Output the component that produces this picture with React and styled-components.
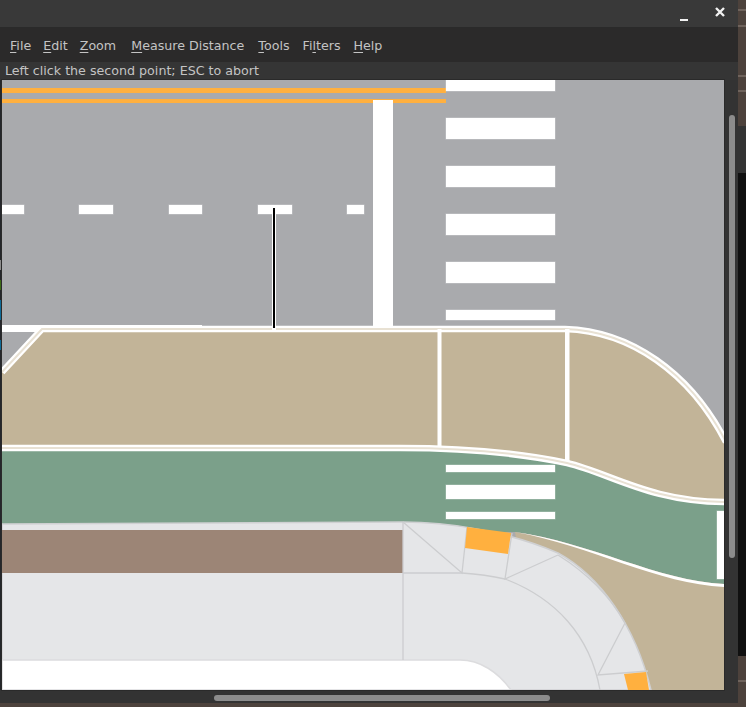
import styled, { createGlobalStyle } from 'styled-components'

const GlobalStyle = createGlobalStyle`
  html, body {
    margin: 0;
    padding: 0;
    background: #111;
    overflow: hidden;
  }
`

const MENUS = [
  { key: 'file', mark: 'F', rest: 'ile' },
  { key: 'edit', mark: 'E', rest: 'dit' },
  { key: 'zoom', mark: 'Z', rest: 'oom', extra: 3 },
  { key: 'measure', mark: 'M', rest: 'easure Distance', extra: 2 },
  { key: 'tools', mark: 'T', rest: 'ools', extra: 1 },
  { key: 'filters', before: 'Fi', mark: 'l', rest: 'ters', extra: 1 },
  { key: 'help', mark: 'H', rest: 'elp' },
]

const CROSSWALK_ROAD = [
  [80, 11],
  [118, 21],
  [166, 21],
  [214, 21],
  [262, 21],
  [310, 10],
]
const CROSSWALK_GREEN = [
  [465, 7],
  [485, 14],
  [512, 7],
]
const DASHES = [
  [2, 22],
  [79, 34],
  [169, 33],
  [258, 34],
  [347, 17],
]

const TAN_TOP = 'M2 372 L42 329 L565 329 C630 331 690 372 726 442'
const TAN_BOTTOM = 'M2 448 L400 448 C450 448 510 451 567 463 C610 473 650 502 726 502'
const GREEN_EDGE = 'M515 532 C590 542 660 582 726 584'

const tileLines = (lines) =>
  lines
    .map((y) => `linear-gradient(#6f635c, #6f635c) 0 ${y}px / 100% 2px no-repeat`)
    .join(', ')

const Page = styled.div`
  width: 746px;
  height: 707px;
  display: flex;
  overflow: hidden;
`

const Window = styled.div`
  width: 738px;
  height: 703px;
  display: flex;
  flex-direction: column;
  background: #333;
  font-family: 'DejaVu Sans', sans-serif;
  font-size: 12.67px;
  color: #c4c4c4;
`

const TitleBar = styled.div`
  height: 28px;
  display: flex;
  justify-content: flex-end;
  align-items: center;
  gap: 24px;
  padding-right: 12px;
  background: #393939;
  box-sizing: border-box;
  border-bottom: 1px solid #2a2a2a;
`

const WindowButton = styled.svg`
  width: 12px;
  height: 12px;
  display: block;
  margin-top: ${(props) => props.$offset || 0}px;
`

const MenuBar = styled.nav`
  height: 34px;
  display: flex;
  align-items: center;
  gap: 12px;
  padding: 1px 0 0 10px;
  background: #2b2a2a;
  box-sizing: border-box;
`

const MenuItem = styled.span`
  line-height: 18px;
  margin-right: ${(props) => props.$extra || 0}px;

  u {
    text-underline-offset: 2px;
  }
`

const StatusBar = styled.div`
  height: 18px;
  line-height: 18px;
  padding-left: 5px;
  background: #353535;
`

const Middle = styled.div`
  flex: 1;
  display: flex;
  min-height: 0;
`

const LeftEdge = styled.div`
  width: 2px;
  background: linear-gradient(
    to bottom,
    #24262a 0,
    #24262a 180px,
    #8d8d8d 180px,
    #8d8d8d 190px,
    #24262a 190px,
    #24262a 200px,
    #3c6a16 200px,
    #3c6a16 210px,
    #24262a 210px,
    #24262a 220px,
    #0f6a96 220px,
    #0f6a96 240px,
    #24262a 240px,
    #24262a 260px,
    #0f6a96 260px,
    #0f6a96 270px,
    #24262a 270px,
    #24262a 610px
  );
`

const Canvas = styled.svg`
  width: 722px;
  height: 610px;
  display: block;
  flex: none;
  background: #a9aaad;
  outline: 1px solid #2a2a2a;
`

const VerticalTrack = styled.div`
  width: 14px;
  padding: 35px 2px 0 5px;
  box-sizing: border-box;
`

const VerticalThumb = styled.div`
  width: 6px;
  height: 443px;
  border-radius: 3px;
  background: #8c8c8c;
`

const HorizontalTrack = styled.div`
  height: 13px;
  padding: 5px 0 0 214px;
  box-sizing: border-box;
`

const HorizontalThumb = styled.div`
  width: 336px;
  height: 6px;
  border-radius: 3px;
  background: #8c8c8c;
`

const SideStrip = styled.div`
  width: 8px;
  height: 707px;
  display: flex;
  flex-direction: column;
  flex: none;
`

const SideTile = styled.div`
  height: ${(props) => props.$height}px;
  background: ${(props) => (props.$lines ? `${tileLines(props.$lines)}, ` : '')}${(props) => props.$color};
`

const Marking = styled.rect`
  fill: #fff;
  stroke: #fff;
  stroke-opacity: 0.35;
  stroke-width: 1px;
`

const App = () => {
  return (
    <Page>
      <GlobalStyle />
      <div>
        <Window>
          <TitleBar>
            <WindowButton viewBox="0 0 12 12" $offset={2}>
              <rect x="2" y="10" width="8" height="2" fill="#f2f2f2" />
            </WindowButton>
            <WindowButton viewBox="0 0 12 12" $offset={-3}>
              <path d="M2 2 L10 10 M10 2 L2 10" stroke="#f2f2f2" strokeWidth="2.4" />
            </WindowButton>
          </TitleBar>
          <MenuBar>
            {MENUS.map((menu) => (
              <MenuItem key={menu.key} $extra={menu.extra}>
                {menu.before}
                <u>{menu.mark}</u>
                {menu.rest}
              </MenuItem>
            ))}
          </MenuBar>
          <StatusBar>Left click the second point; ESC to abort</StatusBar>
          <Middle>
            <LeftEdge />
            <Canvas viewBox="2 80 722 610">
              {/* road markings */}
              <rect x="2" y="88" width="444" height="5" fill="#ffb03f" />
              <rect x="2" y="99" width="444" height="4" fill="#ffb03f" />
              <rect x="373" y="100" width="20" height="228" fill="#fff" />
              {CROSSWALK_ROAD.map(([y, h]) => (
                <Marking key={y} x="446" y={y} width="109" height={h} />
              ))}
              {DASHES.map(([x, w]) => (
                <Marking key={x} x={x} y="205" width={w} height="9" />
              ))}
              <rect x="2" y="325" width="200" height="7" fill="#fff" />

              {/* median */}
              <path
                d={`${TAN_TOP} L726 502 C650 502 610 473 567 463 C510 451 450 448 400 448 L2 448 Z`}
                fill="#c2b498"
              />
              <path d={TAN_TOP} fill="none" stroke="#fff" strokeWidth="6.5" />
              <path d={TAN_TOP} fill="none" stroke="#e8e1d3" strokeWidth="2" />
              <rect x="437.5" y="329" width="4" height="119" fill="#fff" />
              <rect x="565" y="329" width="4.5" height="134" fill="#fff" />

              {/* green strip */}
              <path
                d="M2 448 L400 448 C450 448 510 451 567 463 C610 473 650 502 726 502 L726 584 C660 582 590 542 515 532 L403 532 L2 532 Z"
                fill="#7ba08a"
              />
              <path d={TAN_BOTTOM} fill="none" stroke="#fff" strokeWidth="6.5" />
              <path d={TAN_BOTTOM} fill="none" stroke="#e8e1d3" strokeWidth="2" />
              {CROSSWALK_GREEN.map(([y, h]) => (
                <Marking key={y} x="446" y={y} width="109" height={h} />
              ))}
              <Marking x="717" y="511" width="8" height="68" />

              {/* tan corner under the green, its white edge thins out to the left */}
              <path d={`${GREEN_EDGE} L726 690 L540 690 Z`} fill="#c2b498" />
              <path d={`${GREEN_EDGE} L726 587 C660 585 592 546 515 532 Z`} fill="#fff" />

              {/* sidewalk */}
              <path
                d="M2 524 L403 522 C445 522 505 530 558 553 C600 576 635 625 651 690 L2 690 Z"
                fill="#e5e6e8"
                stroke="#cfd0d2"
                strokeWidth="1.5"
              />
              <rect x="2" y="530" width="401" height="43" fill="#9c8576" />
              <path
                d="M2 660 L460 660 C480 660 498 672 511 690 L2 690 Z"
                fill="#fff"
                stroke="#dcdcde"
                strokeWidth="1.5"
              />
              <rect x="0" y="660.8" width="2" height="30" fill="#fff" />
              <g fill="none" stroke="#cccdcf" strokeWidth="1.3">
                <path d="M403 522 L403 660" />
                <path d="M403 573 L462 573 C478 574 492 576 505 579 C555 598 590 635 600 690" />
                <path d="M403 522 L462 573 L467 527" />
                <path d="M512 533 L505 579 L558 555" />
                <path d="M625 623 L598 675 L648 671" />
                <path d="M558 555 C590 575 612 600 625 623" />
              </g>
              <path d="M467 527 L511 533 L508 554 L465 548 Z" fill="#ffb03f" />
              <path d="M624 674 L646 672 L649 690 L628 690 Z" fill="#ffb03f" />

              {/* measure tool line */}
              <rect x="272" y="208" width="4" height="122" fill="#fff" />
              <rect x="273" y="208" width="2" height="120" fill="#000" />
            </Canvas>
            <VerticalTrack>
              <VerticalThumb />
            </VerticalTrack>
          </Middle>
          <HorizontalTrack>
            <HorizontalThumb />
          </HorizontalTrack>
        </Window>
        <SideTile $height={4} $color="#4d423c" />
      </div>
      <SideStrip>
        <SideTile $height={126} $color="#4d423c" $lines={[9, 25, 75, 90]} />
        <SideTile $height={47} $color="#333" />
        <SideTile $height={483} $color="#101010" />
        <SideTile $height={51} $color="#4d423c" $lines={[24]} />
      </SideStrip>
    </Page>
  )
}

export default App
